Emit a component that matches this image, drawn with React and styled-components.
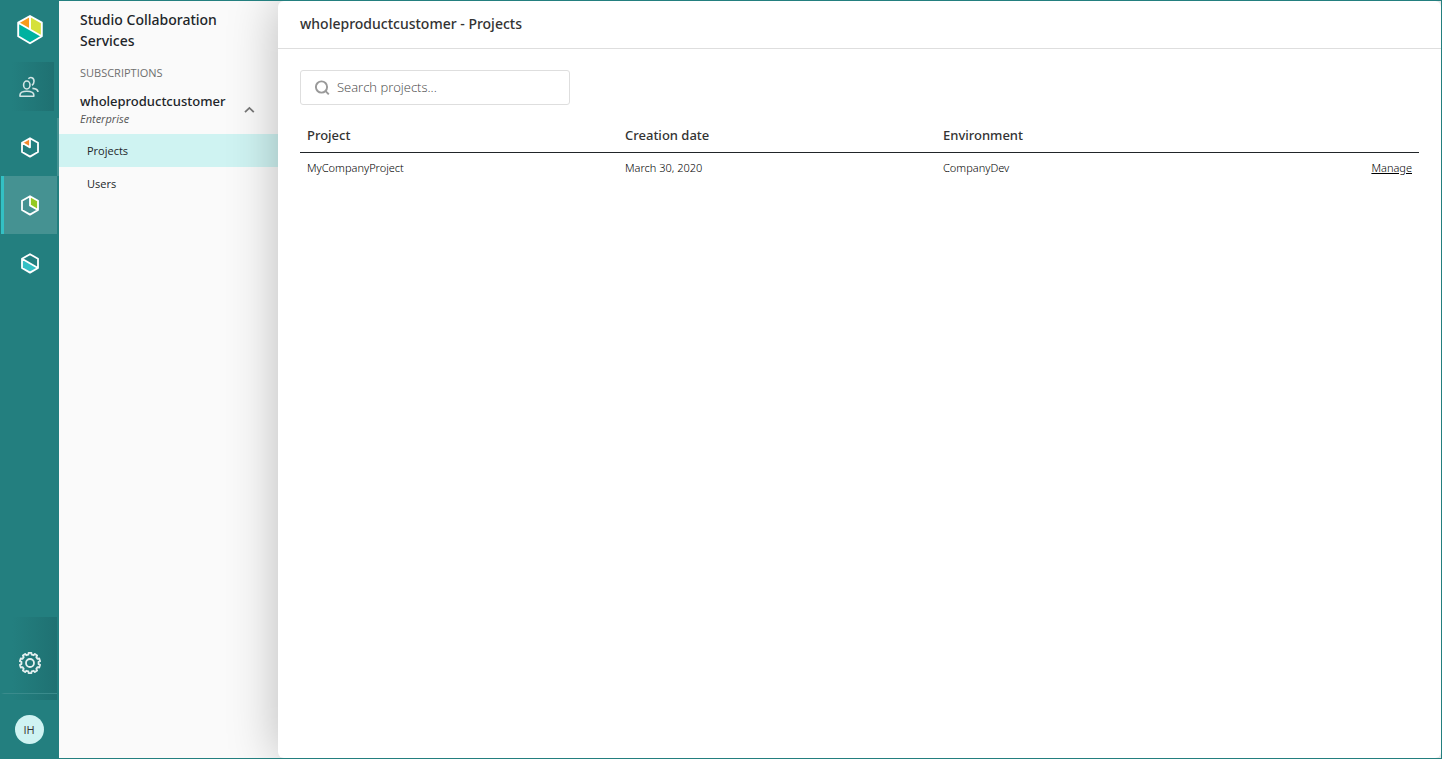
import React from 'react';
import styled, { createGlobalStyle } from 'styled-components';

const colors = {
    teal: '#237f7f',
    tealDark: '#1f7172',
    tealActive: '#459292',
    cyan: '#33c0c4',
    cyanPale: '#cff3f2',
    panel: '#fafafa',
    ink: '#212529',
    text: '#333333',
    muted: '#6f6f6f',
    line: '#dedede'
};

const fonts = {
    body: '"Open Sans", "Noto Sans", sans-serif',
    heading: '"Noto Sans", "Open Sans", sans-serif'
};

const GlobalStyle = createGlobalStyle`
    * {
        box-sizing: border-box;
    }

    body {
        margin: 0;
        font-family: ${fonts.body};
        color: ${colors.text};
    }

    button, input {
        font-family: inherit;
    }
`;

const Shell = styled.div`
    display: flex;
    min-height: 100vh;
    border: 1px solid ${colors.teal};
    background-color: ${colors.panel};
    overflow: hidden;
`;

const Rail = styled.nav`
    width: 58px;
    flex-shrink: 0;
    display: flex;
    flex-direction: column;
    background-color: ${colors.teal};
`;

const RailLogo = styled.a`
    height: 61px;
    padding-top: 13px;
    display: flex;
    justify-content: center;
`;

const RailButton = styled.button`
    width: 56px;
    height: ${props => props.$height}px;
    padding: 0 2px 0 0;
    border: 0;
    border-left: 3px solid ${props => (props.$active ? colors.cyan : 'transparent')};
    background-color: ${props => (props.$active ? colors.tealActive : 'transparent')};
    display: flex;
    align-items: center;
    justify-content: center;
    cursor: pointer;
`;

const ShadedButton = styled(RailButton)`
    width: 53px;
    padding: 0;
    background-image: linear-gradient(to right, ${colors.teal} 20%, ${colors.tealDark});
    background-origin: border-box;
`;

const RailProducts = styled.div`
    padding-top: 7px;
    display: flex;
    flex-direction: column;
`;

const ProductRow = styled.div`
    display: flex;
    justify-content: space-between;
`;

const ScrollMark = styled.span`
    width: 2px;
    height: 58px;
    background-color: ${colors.tealActive};
`;

const RailFooter = styled.div`
    margin-top: auto;
    display: flex;
    flex-direction: column;
`;

const SettingsSlot = styled.div`
    width: 56px;
    padding-bottom: 6px;
    background-image: linear-gradient(to right, ${colors.teal} 20%, ${colors.tealDark});
`;

const SettingsButton = styled(RailButton)`
    height: 77px;
    padding-top: 16px;
    border-bottom: 1px solid #3a8b8c;
`;

const AvatarSlot = styled.div`
    height: 58px;
    padding-right: 2px;
    display: flex;
    align-items: center;
    justify-content: center;
`;

const Avatar = styled.button`
    width: 29px;
    height: 29px;
    padding: 0;
    border: 0;
    border-radius: 50%;
    background-color: ${colors.cyanPale};
    color: ${colors.text};
    font-size: 11px;
    cursor: pointer;
`;

const Panel = styled.aside`
    width: 219px;
    flex-shrink: 0;
    padding-top: 8px;
    color: ${colors.ink};
`;

const PanelTitle = styled.h1`
    margin: 0;
    padding: 0 21px;
    font-family: ${fonts.heading};
    font-size: 14px;
    font-weight: 500;
    line-height: 21px;
`;

const PanelLabel = styled.h2`
    margin: 13px 0 9px;
    padding: 0 21px;
    font-size: 11px;
    font-weight: 400;
    line-height: 18px;
    color: ${colors.muted};
    text-transform: uppercase;
`;

const Subscription = styled.button`
    width: 100%;
    padding: 0 21px 7px;
    border: 0;
    background-color: transparent;
    color: inherit;
    display: flex;
    align-items: center;
    justify-content: space-between;
    text-align: left;
    cursor: pointer;
`;

const SubscriptionName = styled.span`
    display: block;
    font-family: ${fonts.heading};
    font-size: 13px;
    font-weight: 500;
    line-height: 20px;
`;

const SubscriptionPlan = styled.span`
    display: block;
    font-size: 11px;
    font-style: italic;
    line-height: 16px;
    color: #555555;
`;

const PanelLinks = styled.ul`
    margin: 0;
    padding: 0;
    list-style: none;
`;

const PanelLink = styled.a`
    display: block;
    padding: 0 28px;
    font-size: 11px;
    line-height: 33px;
    color: ${colors.ink};
    text-decoration: none;
    background-color: ${props => (props.$active ? colors.cyanPale : 'transparent')};
`;

const Main = styled.main`
    flex: 1;
    min-width: 0;
    border-radius: 6px;
    background-color: white;
    box-shadow: 0 0 50px rgba(0, 0, 0, 0.26);
`;

const MainHeader = styled.header`
    height: 48px;
    padding: 0 22px 2px;
    border-bottom: 1px solid ${colors.line};
    display: flex;
    align-items: center;
`;

const MainTitle = styled.h2`
    margin: 0;
    font-family: ${fonts.heading};
    font-size: 14px;
    font-weight: 500;
    line-height: 21px;
`;

const MainBody = styled.div`
    padding: 21px 22px;
`;

const SearchBox = styled.label`
    width: 270px;
    height: 35px;
    padding: 0 14px;
    border: 1px solid ${colors.line};
    border-radius: 3px;
    display: flex;
    align-items: center;
    gap: 7px;
`;

const SearchInput = styled.input`
    flex: 1;
    min-width: 0;
    padding: 0 0 2px;
    border: 0;
    outline: none;
    background-color: transparent;
    font-size: 13px;
    font-weight: 300;
    color: ${colors.text};

    &::placeholder {
        color: #444444;
        opacity: 1;
    }
`;

const Table = styled.table`
    width: 100%;
    margin-top: 13px;
    border-collapse: collapse;
    table-layout: fixed;
`;

const HeadCell = styled.th`
    width: ${props => props.$width || 'auto'};
    height: 34px;
    padding: 0 7px;
    border-bottom: 1px solid ${colors.ink};
    font-family: ${fonts.heading};
    font-size: 13px;
    font-weight: 500;
    text-align: left;
`;

const Cell = styled.td`
    height: 31px;
    padding: 0 7px;
    font-family: ${fonts.heading};
    font-size: 11px;
    font-weight: 300;
    color: black;
    text-align: ${props => props.$align || 'left'};
`;

const ManageLink = styled.a`
    color: inherit;
    text-decoration: underline;
`;

function Logo() {
    return (
        <svg width="28" height="32" viewBox="0 0 28 32">
            <path d="M14 2 L2.2 8.7 L14 15.3 Z" fill="#f79a1c" />
            <path d="M14 2 L25.8 8.7 V22 L14 15.3 Z" fill="#d5e03a" />
            <path d="M2.2 8.7 L25.8 22 L14 29.2 L2.2 22 Z" fill="#00b2a0" />
            <path
                d="M14 2 L25.8 8.7 V22.2 L14 29.2 L2.2 22.2 V8.7 Z M2.2 8.7 L25.8 22.2 M14 2 V15.4"
                fill="none" stroke="white" strokeWidth="1.9" strokeLinejoin="round"
            />
        </svg>
    );
}

function UsersIcon() {
    return (
        <svg width="20" height="22" viewBox="0 0 20 22" fill="none" stroke="#d3e5e5" strokeWidth="1.6">
            <ellipse cx="7.8" cy="9" rx="3.2" ry="4" />
            <path d="M1 20.2 V19 C1 16.4 3.6 15.2 7.8 15.2 S14.8 16.4 14.8 19 V20.2 Z" strokeLinejoin="round" />
            <path d="M9.4 2.8 C11.2 0.6 15 1.4 15 5.2 C15 7.2 14.2 8.4 13 9.4" />
            <path d="M13.4 12.4 C16.8 12.6 18.8 13.6 19 16" />
        </svg>
    );
}

const cubeFaces = {
    design: { fill: '#f58a2c', face: 'M10 1.2 L2 5.8 L10 10.4 Z', edges: 'M2 5.8 L10 10.4 V1.2' },
    build: { fill: '#94c922', face: 'M10 1.2 L18 5.8 V15 L10 10.4 Z', edges: 'M10 1.2 V10.4 L18 15' },
    run: { fill: '#35c0c5', face: 'M2 5.8 L18 15 L10 19.6 L2 15 Z', edges: 'M2 5.8 L18 15' }
};

function CubeIcon({ kind }) {
    const cube = cubeFaces[kind];
    return (
        <svg width="20" height="21" viewBox="0 0 20 21">
            <path d={cube.face} fill={cube.fill} />
            <path
                d={`M10 1.2 L18 5.8 V15 L10 19.6 L2 15 V5.8 Z ${cube.edges}`}
                fill="none" stroke="white" strokeWidth="1.8" strokeLinejoin="round"
            />
        </svg>
    );
}

// Outline of a cog with rounded square teeth
function gearPath(teeth, outer, inner) {
    const step = (Math.PI * 2) / teeth;
    const points = [];
    for (let i = 0; i < teeth; i++) {
        [[-0.3, inner], [-0.22, outer], [0.22, outer], [0.3, inner]].forEach(([offset, radius]) => {
            const angle = (i + offset) * step - Math.PI / 2;
            points.push(`${12 + Math.cos(angle) * radius} ${12 + Math.sin(angle) * radius}`);
        });
    }
    return `M${points.join(' L')} Z`;
}

function GearIcon() {
    return (
        <svg width="24" height="24" viewBox="0 0 24 24" fill="none" stroke="#e3efef" strokeWidth="1.8" strokeLinejoin="round">
            <path d={gearPath(10, 10.3, 8.6)} />
            <circle cx="12" cy="12" r="4" />
        </svg>
    );
}

function ChevronUp() {
    return (
        <svg width="16" height="16" viewBox="0 0 16 16" fill="none" stroke="#777777" strokeWidth="1.8">
            <path d="M4 11.2 L8.4 6.9 L12.8 11.2" />
        </svg>
    );
}

function SearchIcon() {
    return (
        <svg width="15" height="15" viewBox="0 0 15 15" fill="none" stroke="#999999" strokeWidth="1.9">
            <circle cx="6.5" cy="7" r="5.6" />
            <path d="M10.4 10.9 L13.8 14.3" />
        </svg>
    );
}

const products = [
    { kind: 'design', label: 'Design' },
    { kind: 'build', label: 'Build', active: true },
    { kind: 'run', label: 'Run' }
];

const projects = [
    { name: 'MyCompanyProject', created: 'March 30, 2020', environment: 'CompanyDev' }
];

function NavRail() {
    return (
        <Rail>
            <RailLogo href="#home" aria-label="Home"><Logo /></RailLogo>
            <ShadedButton $height={49} aria-label="Customers"><UsersIcon /></ShadedButton>
            <RailProducts>
                {products.map((product, index) => (
                    <ProductRow key={product.kind}>
                        <RailButton $height={58} $active={product.active} aria-label={product.label}>
                            <CubeIcon kind={product.kind} />
                        </RailButton>
                        {index === 0 && <ScrollMark />}
                    </ProductRow>
                ))}
            </RailProducts>
            <RailFooter>
                <SettingsSlot>
                    <SettingsButton aria-label="Settings"><GearIcon /></SettingsButton>
                </SettingsSlot>
                <AvatarSlot>
                    <Avatar>IH</Avatar>
                </AvatarSlot>
            </RailFooter>
        </Rail>
    );
}

function SidePanel() {
    return (
        <Panel>
            <PanelTitle>Studio Collaboration Services</PanelTitle>
            <PanelLabel>Subscriptions</PanelLabel>
            <Subscription aria-expanded="true">
                <span>
                    <SubscriptionName>wholeproductcustomer</SubscriptionName>
                    <SubscriptionPlan>Enterprise</SubscriptionPlan>
                </span>
                <ChevronUp />
            </Subscription>
            <PanelLinks>
                <li><PanelLink href="#projects" $active>Projects</PanelLink></li>
                <li><PanelLink href="#users">Users</PanelLink></li>
            </PanelLinks>
        </Panel>
    );
}

export default function App() {
    return (
        <Shell>
            <GlobalStyle />
            <NavRail />
            <SidePanel />
            <Main>
                <MainHeader>
                    <MainTitle>wholeproductcustomer - Projects</MainTitle>
                </MainHeader>
                <MainBody>
                    <SearchBox>
                        <SearchIcon />
                        <SearchInput type="text" placeholder="Search projects..." aria-label="Search projects" />
                    </SearchBox>
                    <Table>
                        <thead>
                            <tr>
                                <HeadCell scope="col">Project</HeadCell>
                                <HeadCell scope="col">Creation date</HeadCell>
                                <HeadCell scope="col">Environment</HeadCell>
                                <HeadCell as="td" $width="165px" />
                            </tr>
                        </thead>
                        <tbody>
                            {projects.map(project => (
                                <tr key={project.name}>
                                    <Cell>{project.name}</Cell>
                                    <Cell>{project.created}</Cell>
                                    <Cell>{project.environment}</Cell>
                                    <Cell $align="right"><ManageLink href="#manage">Manage</ManageLink></Cell>
                                </tr>
                            ))}
                        </tbody>
                    </Table>
                </MainBody>
            </Main>
        </Shell>
    );
}
